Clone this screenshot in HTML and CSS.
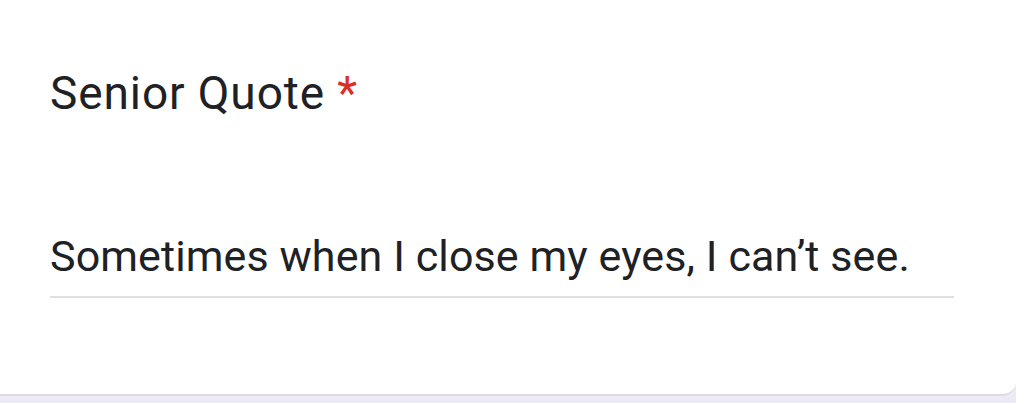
FILE: index.html
```html
<!DOCTYPE html>
<html>
<head>
<meta charset="utf-8">
<link rel="stylesheet" href="styles.css">
</head>
<body>
<div class="card">
  <div class="title">Senior Quote <span class="req">*</span></div>
  <div class="answer">Sometimes when I close my eyes, I can’t see.</div>
  <div class="underline"></div>
</div>
</body>
</html>
```
FILE: styles.css
```css
html, body {
  margin: 0;
  padding: 0;
  background: #ede9f5;
  height: 403px;
  overflow: hidden;
}
.card {
  background: #ffffff;
  height: 396px;
  box-sizing: border-box;
  border-bottom: 2px solid #dcdce0;
  border-bottom-right-radius: 14px;
  padding: 66px 0 0 50px;
  font-family: Roboto, "Liberation Sans", sans-serif;
  color: #202124;
}
.title {
  font-size: 46px;
  line-height: 54px;
  letter-spacing: 0.9px;
}
.req {
  color: #d93025;
}
.answer {
  margin-top: 111px;
  font-size: 43px;
  line-height: 50px;
  letter-spacing: 0.1px;
}
.underline {
  margin-top: 15px;
  width: 904px;
  height: 2px;
  background: #e0e0e0;
}
```
